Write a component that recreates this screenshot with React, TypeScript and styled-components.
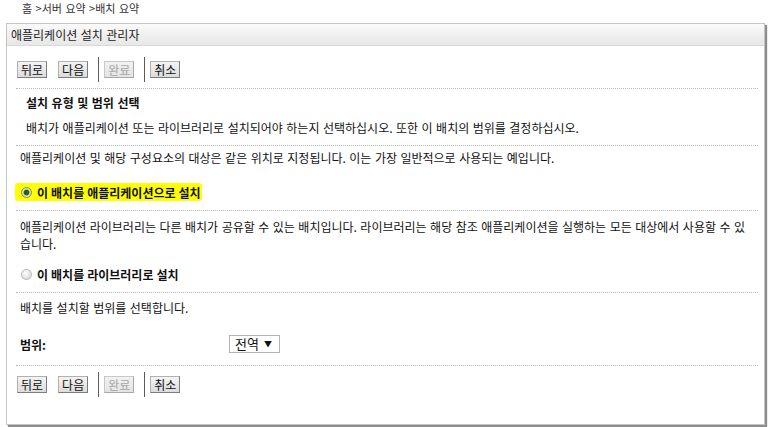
import React from "react";
import styled, { createGlobalStyle } from "styled-components";

const Global = createGlobalStyle`
  html, body { margin: 0; padding: 0; background: #fff; }
  body {
    font-family: "Noto Sans CJK KR", "Liberation Sans", sans-serif;
    font-size: 12px;
    color: #111;
  }
`;

const Page = styled.div`
  width: 773px;
  height: 427px;
  overflow: hidden;
`;

const Crumbs = styled.div`
  height: 23px;
  line-height: 17px;
  padding-left: 22px;
  font-size: 11px;
  color: #333;
  word-spacing: 1px;
`;

const Panel = styled.div`
  margin-left: 6px;
  width: 757px;
  border: 1px solid #c4c4c4;
  box-shadow: 2px 2px 1px #8d8d8d;
  background: #fff;
`;

const TitleBar = styled.div`
  height: 21px;
  line-height: 21px;
  padding-left: 4px;
  border-bottom: 1px solid #dadada;
  background: linear-gradient(#fafafa, #e7e7e7);
  color: #222;
  word-spacing: 0.8px;
`;

const Body = styled.div`
  padding: 0 6px 21px 9px;
`;

const Bar = styled.div<{ $top?: number }>`
  display: flex;
  align-items: center;
  height: 25px;
  margin-top: ${(p) => p.$top ?? 0}px;
  margin-bottom: 6px;
  padding-left: 1px;
`;

const Btn = styled.button<{ $after?: number }>`
  height: 17px;
  padding: 0 3px;
  margin: 0 ${(p) => p.$after ?? 0}px 0 0;
  font-family: "Noto Sans CJK KR", "Liberation Sans", sans-serif;
  font-size: 12px;
  line-height: 15px;
  color: #111;
  border: 1px solid;
  border-color: #b0b0b0 #7c7c7c #7c7c7c #b0b0b0;
  background: linear-gradient(#f4f4f4, #dcdcdc);
  cursor: pointer;
  &:disabled {
    color: #a6a6a6;
    border-color: #c8c8c8 #a8a8a8 #a8a8a8 #c8c8c8;
    background: linear-gradient(#f2f2f2, #e4e4e4);
    cursor: default;
  }
`;

const Sep = styled.span<{ $lead: number }>`
  width: 1px;
  height: 25px;
  background: #5a5a5a;
  margin: 0 5px 0 ${(p) => p.$lead}px;
`;

const Divider = styled.div`
  border-top: 1px dotted #b9b9b9;
`;

const Block = styled.div<{ $h: number }>`
  height: ${(p) => p.$h}px;
  display: flex;
  flex-direction: column;
`;

const Line = styled.div<{ $top: number; $indent?: number; $bold?: boolean }>`
  margin-top: ${(p) => p.$top}px;
  padding-left: ${(p) => p.$indent ?? 4}px;
  line-height: 16px;
  font-weight: ${(p) => (p.$bold ? 700 : 400)};
  word-spacing: 0.8px;
  white-space: nowrap;
`;

const Para = styled.div<{ $top: number }>`
  margin-top: ${(p) => p.$top}px;
  padding-left: 4px;
  line-height: 17px;
  word-spacing: 0.8px;
  white-space: nowrap;
`;

const RadioRow = styled.label<{ $top: number }>`
  margin-top: ${(p) => p.$top}px;
  height: 18px;
  display: flex;
  align-items: center;
`;

const Mark = styled.span<{ $on?: boolean }>`
  display: inline-flex;
  align-items: center;
  gap: 5px;
  height: 18px;
  padding: 0 1px 0 6px;
  margin-left: -1px;
  border-radius: 3px;
  background: ${(p) => (p.$on ? "#ffff00" : "transparent")};
  font-weight: 700;
  word-spacing: 0.3px;
`;

const Radio = styled.span<{ $on?: boolean }>`
  box-sizing: border-box;
  width: 11px;
  height: 11px;
  border-radius: 50%;
  border: 1px solid ${(p) => (p.$on ? "#8c8c5e" : "#b8b8b8")};
  background: ${(p) =>
    p.$on
      ? "radial-gradient(circle, #2f5f1c 0 2.3px, #7c9a52 2.8px, #e4e6b8 3.4px, #c2c296 100%)"
      : "radial-gradient(circle at 40% 35%, #ffffff 0, #ececec 40%, #cfcfcf 100%)"};
  flex: none;
`;

const Field = styled.div<{ $top: number }>`
  margin-top: ${(p) => p.$top}px;
  display: grid;
  grid-template-columns: 209px auto;
  align-items: center;
  height: 18px;
  padding-left: 4px;
`;

const Label = styled.span`
  font-weight: 700;
`;

const Select = styled.div`
  box-sizing: border-box;
  width: 51px;
  height: 18px;
  border: 1px solid #b4b4aa;
  display: flex;
  align-items: center;
  justify-content: space-between;
  padding: 0 7px 0 5px;
  font-size: 13px;
  line-height: 16px;
  color: #111;
`;

const Arrow = styled.span`
  font-size: 8px;
  color: #111;
`;

function Buttons({ top }: { top?: number }) {
  return (
    <Bar $top={top}>
      <Btn $after={11}>뒤로</Btn>
      <Btn>다음</Btn>
      <Sep $lead={10} />
      <Btn disabled>완료</Btn>
      <Sep $lead={10} />
      <Btn>취소</Btn>
    </Bar>
  );
}

export default function App() {
  return (
    <Page>
      <Global />
      <Crumbs>홈 &gt;서버 요약 &gt;배치 요약</Crumbs>
      <Panel>
        <TitleBar>애플리케이션 설치 관리자</TitleBar>
        <Body>
          <Buttons top={11} />
          <Divider />
          <Block $h={56}>
            <Line $top={6} $indent={10} $bold>
              설치 유형 및 범위 선택
            </Line>
            <Line $top={9} $indent={10}>
              배치가 애플리케이션 또는 라이브러리로 설치되어야 하는지 선택하십시오. 또한 이 배치의 범위를 결정하십시오.
            </Line>
          </Block>
          <Divider />
          <Block $h={64}>
            <Line $top={4}>
              애플리케이션 및 해당 구성요소의 대상은 같은 위치로 지정됩니다. 이는 가장 일반적으로 사용되는 예입니다.
            </Line>
            <RadioRow $top={17}>
              <Mark $on>
                <Radio $on />이 배치를 애플리케이션으로 설치
              </Mark>
            </RadioRow>
          </Block>
          <Divider />
          <Block $h={81}>
            <Para $top={7}>
              애플리케이션 라이브러리는 다른 배치가 공유할 수 있는 배치입니다. 라이브러리는 해당 참조 애플리케이션을 실행하는 모든 대상에서 사용할 수 있
              <br />
              습니다.
            </Para>
            <RadioRow $top={13}>
              <Mark>
                <Radio />이 배치를 라이브러리로 설치
              </Mark>
            </RadioRow>
          </Block>
          <Divider />
          <Block $h={72}>
            <Line $top={7}>배치를 설치할 범위를 선택합니다.</Line>
            <Field $top={19}>
              <Label>범위:</Label>
              <Select>
                전역 <Arrow>▼</Arrow>
              </Select>
            </Field>
          </Block>
          <Divider />
          <Buttons top={6} />
        </Body>
      </Panel>
    </Page>
  );
}
